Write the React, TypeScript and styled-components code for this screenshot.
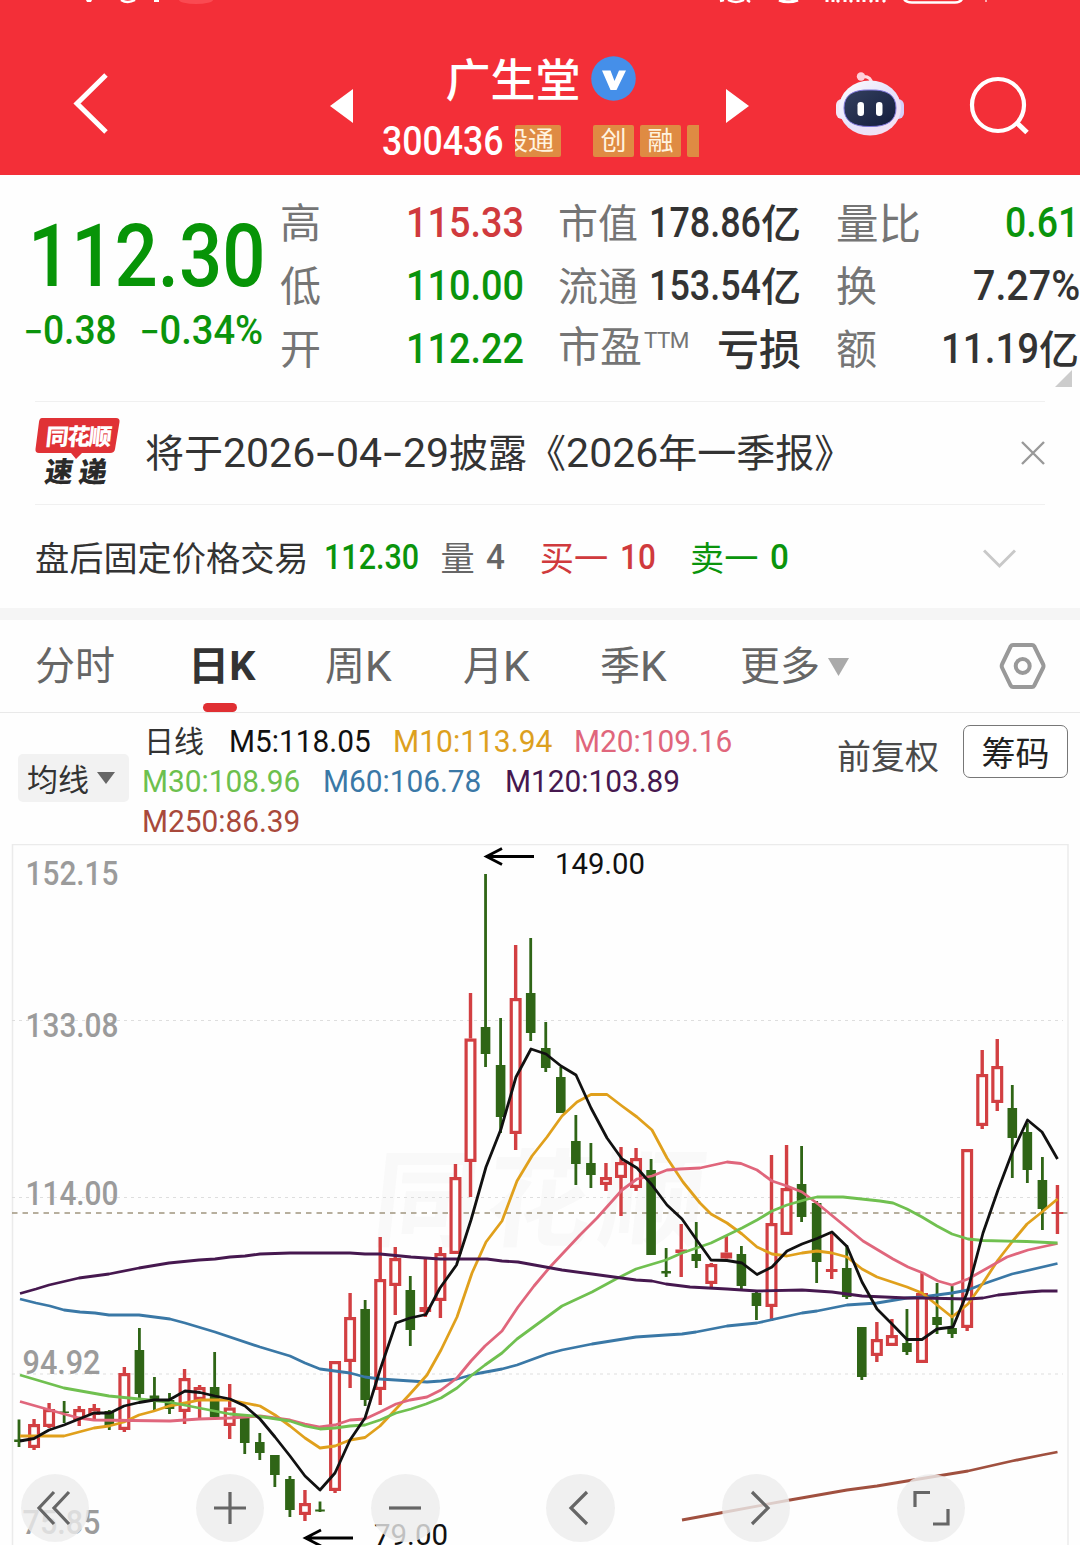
import React, { useLayoutEffect, useRef, useState } from 'react';
import styled, { createGlobalStyle } from 'styled-components';

const GlobalStyle = createGlobalStyle`
  * { box-sizing: border-box; }
  html, body { margin: 0; padding: 0; background: #fefefe; }
  body { width: 1080px; height: 1545px; overflow: hidden; }
  svg { display: block; flex: none; }
`;

const FONT = `Roboto, "Noto Sans CJK SC", sans-serif`;
const RED = '#d03a3d';
const GREEN = '#0a940c';
const INK = '#333';
const GREY = '#757575';

/* ---------- text squeezed to a column width ---------- */

const FitBox = styled.span<{ $w: number; $mr?: number; $ml?: number }>`
  display: inline-block;
  flex: none;
  width: ${(p) => p.$w}px;
  margin-left: ${(p) => p.$ml ?? 0}px;
  margin-right: ${(p) => p.$mr ?? 0}px;
  white-space: nowrap;
`;

const FitInner = styled.span<{ $size: number; $color: string; $weight: number }>`
  display: inline-block;
  transform-origin: 0 50%;
  font-size: ${(p) => p.$size}px;
  font-weight: ${(p) => p.$weight};
  color: ${(p) => p.$color};
`;

const Dash = styled.span`
  display: inline-block;
  margin: 0 1px;
  transform: scaleX(1.22);
  font-family: Inter, ${FONT};
  font-weight: 400;
`;

type FitProps = {
  w: number;
  size: number;
  color?: string;
  weight?: number;
  ml?: number;
  mr?: number;
  children: React.ReactNode;
};

function Fit({ w, size, color = INK, weight = 500, ml, mr, children }: FitProps) {
  const ref = useRef<HTMLSpanElement>(null);
  const [scale, setScale] = useState(1);
  useLayoutEffect(() => {
    if (ref.current) setScale(w / ref.current.offsetWidth);
  }, [w]);
  return (
    <FitBox $w={w} $ml={ml} $mr={mr}>
      <FitInner ref={ref} $size={size} $color={color} $weight={weight} style={{ transform: `scaleX(${scale})` }}>
        {children}
      </FitInner>
    </FitBox>
  );
}

/* ---------- page ---------- */

const Page = styled.main`
  width: 1080px;
  height: 1545px;
  overflow: hidden;
  background: #fefefe;
  font-family: ${FONT};
  color: ${INK};
  display: flex;
  flex-direction: column;
`;

/* ---------- header ---------- */

const Header = styled.header`
  height: 175px;
  flex: none;
  background: #f32f38;
  color: #fff;
`;

const Toolbar = styled.div`
  display: flex;
  align-items: flex-start;
  padding: 38px 50px 0 72px;
`;

const IconButton = styled.button<{ $ml?: number; $mt?: number }>`
  border: 0;
  padding: 0;
  background: none;
  flex: none;
  margin-left: ${(p) => p.$ml ?? 0}px;
  margin-top: ${(p) => p.$mt ?? 0}px;
`;

const Title = styled.div`
  width: 316px;
  margin-left: 30px;
  flex: none;
`;

const NameRow = styled.div`
  display: flex;
  justify-content: center;
  align-items: center;
  height: 66px;
  gap: 10px;
  padding-right: 1px;
`;

const Name = styled.h1`
  margin: 0;
  padding-top: 6px;
  font-size: 45px;
  line-height: 60px;
  font-weight: 500;
`;

const CodeRow = styled.div`
  display: flex;
  align-items: center;
  height: 58px;
  line-height: 50px;

  ${FitBox} {
    padding-top: 8px;
  }
`;

const Tags = styled.div`
  display: flex;
  width: 184px;
  height: 32px;
  overflow: hidden;
`;

const Tag = styled.span<{ $w: number; $ml?: number; $shift?: number }>`
  flex: none;
  width: ${(p) => p.$w}px;
  height: 32px;
  margin-left: ${(p) => p.$ml ?? 0}px;
  border-radius: 2px;
  background: #df8b43;
  color: #fff4e0;
  font-size: 26px;
  line-height: 32px;
  text-align: center;
  text-indent: ${(p) => p.$shift ?? 0}px;
  white-space: nowrap;
  overflow: hidden;
`;

/* ---------- quote ---------- */

const Quote = styled.section`
  position: relative;
  height: 226px;
  flex: none;
  display: flex;
  padding: 18px 0 0 0;
`;

const PriceBlock = styled.div`
  width: 280px;
  flex: none;
  padding-top: 12px;
`;

const Price = styled.div`
  height: 102px;
  line-height: 102px;
  padding-left: 28px;
`;

const Change = styled.div`
  display: flex;
  height: 46px;
  line-height: 46px;
  padding-left: 24px;
`;

const Stats = styled.div`
  display: grid;
  grid-template-columns: repeat(3, 243px);
  grid-auto-rows: 63px;
  column-gap: 35px;
`;

const Stat = styled.div`
  display: flex;
  justify-content: space-between;
  align-items: center;
  line-height: 57px;
  white-space: nowrap;

  ${FitBox} {
    padding-top: 5px;
  }
`;

const Label = styled.span<{ $size?: number }>`
  font-size: ${(p) => p.$size ?? 41}px;
  color: ${GREY};
`;

const Sup = styled.span`
  margin-left: 2px;
  font-size: 22.5px;
  letter-spacing: -0.6px;
  position: relative;
  top: -14px;
`;

const Value = styled.span`
  display: flex;
  align-items: center;
`;

const Unit = styled.span<{ $size?: number }>`
  font-size: ${(p) => p.$size ?? 40}px;
  font-weight: 500;
  color: ${INK};
`;

const Corner = styled.span`
  position: absolute;
  right: 8px;
  top: 195px;
  width: 17px;
  height: 17px;
  background: #ccc;
  clip-path: polygon(100% 0, 100% 100%, 0 100%);
`;

/* ---------- notice ---------- */

const Notice = styled.section`
  height: 104px;
  flex: none;
  margin: 0 35px;
  border-top: 1px solid #f0f0f0;
  border-bottom: 1px solid #f0f0f0;
  display: flex;
  align-items: center;
`;

const NoticeText = styled.p`
  margin: 0 0 0 25px;
  flex: 1;
  font-size: 39px;
  line-height: 60px;
  white-space: nowrap;
`;

const Digits = styled.span`
  font-size: 41px;
`;

/* ---------- after hours ---------- */

const AfterHours = styled.section`
  height: 103px;
  flex: none;
  display: flex;
  align-items: center;
  padding: 4px 64px 0 35px;
  line-height: 46px;

  ${FitBox} {
    padding-top: 4px;
  }
`;

const Word = styled.span<{ $color?: string; $ml?: number }>`
  font-size: 34.2px;
  white-space: nowrap;
  color: ${(p) => p.$color ?? INK};
  margin-left: ${(p) => p.$ml ?? 0}px;
`;

const Push = styled.span`
  margin-left: auto;
`;

const Band = styled.div`
  height: 12px;
  flex: none;
  background: #f5f5f5;
`;

/* ---------- tabs ---------- */

const Tabs = styled.nav`
  height: 93px;
  flex: none;
  border-bottom: 1px solid #e9e9e9;
  display: flex;
  padding: 0 34px 0 35px;
`;

const Tab = styled.div<{ $active?: boolean; $w: number }>`
  width: ${(p) => p.$w}px;
  flex: none;
  display: flex;
  flex-direction: column;
  align-items: flex-start;
  font-size: 40px;
  line-height: 60px;
  height: 92px;
  color: ${(p) => (p.$active ? INK : '#666')};
  font-weight: ${(p) => (p.$active ? 700 : 400)};
  padding-top: 2px;
`;

const TabLabel = styled.span`
  display: flex;
  align-items: center;
  height: 81px;
  padding-top: 9px;
`;

const Kay = styled.span`
  font-size: 42.5px;
`;

const Marker = styled.span`
  width: 34px;
  height: 9px;
  margin-left: 15px;
  border-radius: 5px;
  background: #e02f33;
`;

const Triangle = styled.span<{ $w: number; $h: number; $color: string }>`
  width: ${(p) => p.$w}px;
  height: ${(p) => p.$h}px;
  margin-left: 8px;
  background: ${(p) => p.$color};
  clip-path: polygon(0 0, 100% 0, 50% 100%);
`;

/* ---------- moving averages ---------- */

const Averages = styled.section`
  height: 131px;
  flex: none;
  display: flex;
  align-items: flex-start;
  padding-left: 18px;
`;

const Picker = styled.button`
  width: 111px;
  height: 48px;
  margin: 41px 14px 0 0;
  flex: none;
  border: 0;
  border-radius: 5px;
  background: #f2f2f2;
  color: ${INK};
  font: 400 31px/42px ${FONT};
  padding: 0 0 0 9px;
  display: flex;
  align-items: center;
`;

const PickerText = styled.span`
  padding-top: 5px;
`;

const Legend = styled.div`
  width: 694px;
  flex: none;
  padding-top: 9px;
`;

const LegendRow = styled.div`
  display: flex;
  height: 40px;
  line-height: 40px;
`;

const LegendTitle = styled.span`
  font-size: 30px;
  width: 86px;
  padding-left: 1px;
`;

const Adjust = styled.span`
  font-size: 34px;
  line-height: 52px;
  margin-top: 18px;
  color: #4a4a4a;
`;

const ChipButton = styled.button`
  width: 105px;
  height: 53px;
  margin: 12px 0 0 24px;
  border: 1px solid #777;
  border-radius: 7px;
  background: #fff;
  color: #222;
  font: 400 34px/46px ${FONT};
  padding: 5px 0 0;
`;

/* ---------- chart ---------- */

const ChartArea = styled.section`
  position: relative;
  height: 701px;
  flex: none;
`;

const Controls = styled.div`
  position: absolute;
  left: 20.8px;
  top: 629.5px;
  display: flex;
  gap: 106.8px;
`;

const RoundButton = styled.button`
  width: 68.4px;
  height: 68.4px;
  border: 0;
  border-radius: 50%;
  padding: 0;
  background: rgba(236, 236, 236, 0.8);
  display: grid;
  place-items: center;
`;

type Candle = ['r' | 'g', number, number, number, number];

// direction, high, low, body top, body bottom
const candles: Candle[] = [
  ['g', 1419.5, 1447, 1439.5, 1442], ['r', 1419, 1450, 1424, 1448], ['r', 1403, 1428, 1409, 1427],
  ['g', 1401, 1423, 1411.5, 1413], ['r', 1406, 1426, 1409, 1420], ['r', 1404, 1420, 1408, 1415],
  ['g', 1410, 1430, 1411, 1426], ['r', 1367, 1432, 1373, 1430], ['g', 1328, 1398, 1350, 1394],
  ['g', 1377, 1410, 1395.5, 1401], ['g', 1393, 1414, 1400, 1409], ['r', 1369, 1424, 1378, 1412],
  ['r', 1385, 1418, 1387, 1400], ['g', 1352, 1417, 1387, 1417], ['r', 1384, 1439, 1407.5, 1426],
  ['g', 1416, 1454, 1417, 1443], ['g', 1433, 1460, 1442, 1453], ['g', 1455, 1487, 1455, 1475],
  ['g', 1476, 1517, 1479, 1510], ['r', 1490, 1521, 1503, 1515], ['g', 1501.5, 1512, 1509.5, 1511.5],
  ['r', 1361, 1493, 1361, 1491], ['r', 1293, 1388, 1317, 1362], ['g', 1300, 1406, 1309, 1400],
  ['r', 1237, 1405, 1279, 1390], ['r', 1247, 1315, 1258, 1286], ['g', 1276, 1346, 1290, 1330],
  ['r', 1258, 1317, 1307, 1312], ['r', 1247, 1318, 1253, 1301], ['r', 1164, 1254, 1177, 1254],
  ['r', 993, 1197, 1038.5, 1162], ['g', 874, 1067, 1027, 1054], ['g', 1018, 1133, 1065, 1117],
  ['r', 945, 1150, 998, 1134], ['g', 938, 1041, 993, 1033], ['g', 1022, 1072, 1048, 1068],
  ['g', 1067, 1113, 1077, 1113], ['g', 1115, 1185, 1141, 1164], ['g', 1143, 1188, 1163, 1175],
  ['r', 1163, 1191, 1177, 1185], ['r', 1147, 1216, 1162, 1178], ['r', 1148, 1191, 1158, 1188],
  ['g', 1159, 1255, 1170, 1255], ['g', 1248, 1277, 1271, 1273.5], ['r', 1224, 1277, 1249.5, 1253],
  ['g', 1222, 1268, 1254, 1261], ['r', 1263, 1287, 1264, 1284], ['r', 1236, 1259, 1252.5, 1258.5],
  ['g', 1246, 1289, 1254, 1286], ['g', 1291, 1320, 1293, 1306], ['r', 1155, 1321, 1223, 1307],
  ['r', 1145, 1235, 1188, 1235], ['g', 1146, 1222, 1184, 1217], ['g', 1201, 1283, 1203, 1262],
  ['r', 1234, 1279, 1269, 1272], ['g', 1245, 1299, 1268, 1297], ['g', 1327, 1380, 1327, 1377],
  ['r', 1322, 1362, 1339, 1356], ['r', 1319, 1346, 1335, 1346], ['g', 1309, 1355, 1343, 1352],
  ['r', 1273, 1363, 1293, 1363], ['g', 1283, 1334, 1317, 1325], ['g', 1286, 1338, 1328, 1334],
  ['r', 1149, 1331, 1149, 1328], ['r', 1050, 1129, 1074, 1126], ['r', 1039, 1111, 1066, 1103],
  ['g', 1085, 1178, 1108, 1138], ['g', 1123, 1183, 1132, 1170], ['g', 1157, 1230, 1180, 1209],
  ['r', 1185, 1234, 1212, 1214],
];

const averages: { color: string; points: string }[] = [
  {
    color: '#a0503f',
    points: '682,1520 720,1513 790,1500 847,1490 877,1486 907,1481 968,1471 1012,1461 1042,1455 1057.5,1452',
  },
  {
    color: '#3a78a6',
    points:
      '20,1299 36,1303 50,1306 64,1310 80,1312 95,1313 109,1315 139,1315 170,1319 185,1323 215,1332 260,1347 290,1356 305,1363 320,1369 335,1371 350,1373 365,1377 380,1379 411,1381 427,1382 441,1381 457,1379 475,1374 502,1369 517,1365 547,1354 562,1350 592,1344 636,1337 666,1335 682,1334 696,1332 727,1326 757,1323 802,1313 817,1311 847,1305 877,1303 907,1298 922,1297 952,1293 968,1290 983,1284 1012,1274 1057.5,1263.5',
  },
  {
    color: '#e0a01c',
    points:
      '20,1436 64,1436 79,1432 94,1428 109,1426 124,1422 139,1415 154,1411 169,1406 185,1403 200,1400 230,1400 245,1403 260,1406 275,1415 290,1426 305,1438 320,1448 335,1446 350,1440 365,1437.5 380,1426 396,1409 410,1394 427,1375 441,1350 457,1317 472,1273 486,1242 502,1221 517,1181 532,1156 547,1137 562,1116 577,1102 591,1094.5 607,1094.5 622,1106 637,1117 652,1130 667,1158 683,1182 700,1203 711,1214 727,1223 742,1234 757,1247 772,1254 787,1256 802,1253 817,1251 832,1253 847,1257 862,1269 877,1277 892,1282 907,1287 922,1293 937,1305 952,1317 968,1304 983,1283 998,1260 1012,1242 1027,1224 1042,1212 1057.5,1199',
  },
  {
    color: '#e0667c',
    points:
      '20,1401.5 64,1414 79,1418 94,1420 170,1421 199,1419 230,1418 260,1416 290,1420 305,1424 320,1427 335,1425 350,1420 365,1419 380,1412 396,1404 410,1400 427,1397 441,1390 457,1378 471,1361 485,1346 502,1331 518,1307 534,1286 550,1267 565,1251 580,1235 597,1218 622,1190 637,1179 652,1176 667,1170 680,1169 700,1168 727,1162 741,1163.5 757,1170 772,1181 787,1186 802,1192 818,1204 863,1241 893,1259 908,1267 923,1273 938,1281 952,1285 968,1279 1007,1257 1028,1250 1057.5,1243.5',
  },
  {
    color: '#70c050',
    points:
      '20,1375 64,1388 109,1396 139,1399 169,1402 199,1408 230,1414 260,1416.5 290,1421 305,1426 320,1429 335,1428 350,1426 365,1425 380,1420 396,1413 411,1409 426,1404 441,1398 457,1388 472,1375 485,1365 502,1353 517,1339 532,1328 547,1317 562,1306 592,1292 616,1279 636,1269 666,1260 682,1253 711,1243 742,1228 757,1220 772,1211 787,1205 808,1199 817,1197 843,1197 880,1201 893,1203 907,1209 922,1217 937,1226 952,1234 968,1239 983,1240.5 1027,1241.5 1057.5,1243',
  },
  {
    color: '#46184f',
    points:
      '20,1293.5 36,1289 49,1285 79,1278 109,1274 139,1268 169,1263 199,1260 215,1259 230,1257 245,1256 260,1254 290,1253 350,1253 365,1254 380,1254 411,1257 440,1259 487,1259 502,1261 518,1262 562,1270 592,1274 636,1280 652,1281 666,1284 690,1287 727,1289 757,1291 802,1290 832,1292 862,1296 907,1298 922,1298 968,1299 983,1298 998,1295 1028,1292 1042,1291 1057.5,1291',
  },
  {
    color: '#111',
    points:
      '20,1441 34,1438.5 49,1430 64,1425 79,1419 94,1413 110,1413 124,1406 139,1402.5 154,1400 169,1400 185,1391 200,1392.5 215,1396 230,1399 245,1406 260,1419 275,1437 290,1456 305,1476 320,1490 335,1473 350,1440 365,1418 380,1370 396,1323 410,1318 426,1314.5 440,1288 456.5,1265 471,1220 486,1167 501,1129 516,1077 531,1049 546,1054 561,1066 576,1075 591,1108 607,1138 622,1159 637,1168 652,1185 667,1205 682,1219 696,1239 711,1260 727,1260.5 742,1263 757,1274.5 772,1267 787,1251 802,1244 817,1238.5 832,1232 847,1246.5 862,1282 877,1309 892,1324 907,1339.5 922,1339.5 937,1329 953,1327 967,1293 983,1233 998,1190 1012,1153 1027.5,1120 1042,1132 1057.5,1159',
  },
];

const axis: [string, number, number, number][] = [
  ['152.15', 25.5, 884.5, 93],
  ['133.08', 25.5, 1036.5, 93],
  ['114.00', 25.5, 1205, 93],
  ['94.92', 22.5, 1374, 78],
  ['75.85', 22.5, 1534, 78],
];

function CandleMark({ i, c }: { i: number; c: Candle }) {
  const [dir, hi, lo, top, bottom] = c;
  const x = 19 + i * 15.05;
  if (dir === 'g') {
    return (
      <g fill="#2f6516">
        <rect x={x - 1.4} y={hi} width={2.8} height={lo - hi} />
        <rect x={x - 4.8} y={top} width={9.6} height={bottom - top} />
      </g>
    );
  }
  const flat = bottom - top < 7;
  return (
    <g fill="#d23f42">
      <rect x={x - 1.7} y={hi} width={3.4} height={Math.max(0, top - hi)} />
      <rect x={x - 1.7} y={bottom} width={3.4} height={Math.max(0, lo - bottom)} />
      {flat ? (
        <rect x={x - 5.8} y={top} width={11.6} height={bottom - top} />
      ) : (
        <rect x={x - 4.4} y={top + 1.6} width={8.8} height={bottom - top - 3.2} fill="#fefefe" stroke="#d23f42" strokeWidth={3.2} />
      )}
    </g>
  );
}

function Chart() {
  return (
    <svg width="1080" height="701" viewBox="0 844 1080 701" fontFamily={FONT}>
      <text x="372" y="1238" fill="#f9f9f9" fontWeight="700" fontSize="106" textLength="332" transform="skewX(-6) translate(128 0)">
        同花顺
      </text>
      <path d="M12.5 1545V844.5H1068V1545" fill="none" stroke="#ebebeb" strokeWidth="1.5" />
      <g stroke="#dedede" strokeWidth="1" strokeDasharray="3 4">
        <path d="M12 1020.5H1063" />
        <path d="M12 1197.5H1063" />
        <path d="M12 1374H1063" />
      </g>
      {axis.map(([t, x, y, w]) => (
        <text key={t} x={x} y={y} fontSize="33.5" fontWeight="500" fill="#9b9b9b" textLength={w} lengthAdjust="spacingAndGlyphs">
          {t}
        </text>
      ))}
      <path d="M12 1213H1068" stroke="#a0957f" strokeWidth="1.4" strokeDasharray="5.5 5" />
      {candles.map((c, i) => (
        <CandleMark key={i} i={i} c={c} />
      ))}
      {averages.map((a) => (
        <polyline key={a.color} points={a.points} fill="none" stroke={a.color} strokeWidth="2.8" strokeLinejoin="round" />
      ))}
      <g fill="none" stroke="#000" strokeWidth="2.8">
        <path d="M534 856.5H487M502 848.5L486.5 856.5L502 864.5" />
        <path d="M353 1538H306M321 1530L305.5 1538L321 1546" />
      </g>
      <text x="555" y="874" fontSize="30" fill="#111" textLength="90" lengthAdjust="spacingAndGlyphs">149.00</text>
      <text x="374" y="1545" fontSize="30" fill="#111" textLength="74" lengthAdjust="spacingAndGlyphs">79.00</text>
    </svg>
  );
}

const controlIcons = [
  'M15 0L0 16L15 32M30 0L15 16L30 32',
  'M16 0V32M0 16H32',
  'M0 16H32',
  'M22 0L6 16L22 32',
  'M12 0L28 16L12 32',
  'M0 15V0.5H15M33 17V32H18',
];

function StatusStrip() {
  return (
    <svg width="1080" height="8" viewBox="0 0 1080 8" fill="none" stroke="#fff">
      <path d="M86 0H92L91 2H87Z" fill="#fff" stroke="none" />
      <path d="M121 0Q127.500 4 135 0" strokeWidth="2.500" />
      <path d="M154 0H159V2H154Z" fill="#fff" stroke="none" />
      <ellipse cx="196" cy="0" rx="17" ry="4" fill="#fa4a52" stroke="none" />
      <path d="M720 1L724 0M728 0Q736 4 744 0M747 0L750 2" strokeWidth="2.500" />
      <path d="M779 0Q788 3.500 798 0" strokeWidth="3" />
      <path d="M827 0V2M833 0V2M839 0L837 2M845 0V2M852 0L850 2M858 0V2M864 0V2M870 0L872 2M877 0V2M883 0L885 2" strokeWidth="3" />
      <path d="M903 -4Q904 2.500 912 2.500H955Q962 2.500 963 -4" strokeWidth="2.500" />
      <path d="M986 0V2" strokeWidth="2" opacity="0.600" />
    </svg>
  );
}

function BrandLogo() {
  return (
    <svg width="85" height="72" viewBox="0 0 85 72">
      <path d="M7 1H81Q85 1 84.500 5L80 32Q79.500 36 75 36H47L41 42L36 36H4Q0 36 0.500 32L4 5Q4.500 1 7 1Z" fill="#e03236" />
      <g fontFamily={FONT} fontWeight="900">
        <text x="13" y="28" fontSize="23" fill="#fff" textLength="66" transform="skewX(-6)">同花顺</text>
        <text x="18" y="65.500" fontSize="28" fill="#2a2a2a" textLength="62" transform="skewX(-8)">速递</text>
      </g>
    </svg>
  );
}

function Robot() {
  return (
    <svg width="70" height="66" viewBox="0 0 70 66">
      <defs>
        <linearGradient id="shell" x1="0" y1="0" x2="1" y2="1">
          <stop offset="0" stopColor="#fff" />
          <stop offset="0.5" stopColor="#e6e3fb" />
          <stop offset="1" stopColor="#f7dff0" />
        </linearGradient>
        <linearGradient id="visor" x1="0" y1="0" x2="1" y2="1">
          <stop offset="0" stopColor="#33405f" />
          <stop offset="1" stopColor="#141c3c" />
        </linearGradient>
      </defs>
      <path d="M27 4.500Q36 3.500 37 12" fill="none" stroke="#ffdbe2" strokeWidth="3" />
      <circle cx="26" cy="4.500" r="4.200" fill="#ffcfd9" />
      <rect x="1" y="27" width="14" height="20" rx="6" fill="#f3e8f6" />
      <rect x="55" y="27" width="14" height="20" rx="6" fill="#d5cff8" />
      <ellipse cx="35" cy="36" rx="31" ry="27.500" fill="url(#shell)" />
      <path d="M35 18Q61 17 61 36Q61 55 35 54.500Q9 55 9 36Q9 17 35 18Z" fill="url(#visor)" stroke="#7c74d8" strokeWidth="1" />
      <rect x="22.500" y="30" width="6.500" height="14" rx="3.200" fill="#fff" />
      <rect x="41" y="30" width="6.500" height="14" rx="3.200" fill="#fff" />
    </svg>
  );
}

export default function App() {
  return (
    <>
      <GlobalStyle />
      <Page>
        <Header>
          <StatusStrip />
          <Toolbar>
            <IconButton $mt={26}>
              <svg width="38" height="64" viewBox="0 0 38 64">
                <path d="M34 3L5 31.500L34 60" fill="none" stroke="#fff" strokeWidth="5" />
              </svg>
            </IconButton>
            <IconButton $ml={220} $mt={42}>
              <svg width="23" height="36" viewBox="0 0 23 36"><path d="M0 18L23 1V35Z" fill="#fff" /></svg>
            </IconButton>
            <Title>
              <NameRow>
                <Name>广生堂</Name>
                <svg width="45" height="46" viewBox="0 0 45 46">
                  <circle cx="22.500" cy="22.500" r="22.300" fill="#458fe9" />
                  <path d="M11 14.500H19.500L23.500 25L28 14.500H35L25.500 34H19.500Z" fill="#fff" />
                </svg>
              </NameRow>
              <CodeRow>
                <Fit w={122} size={41.500} color="#fff" ml={-1} mr={11}>300436</Fit>
                <Tags>
                  <Tag $w={46} $shift={-20}>股通</Tag>
                  <Tag $w={41} $ml={32}>创</Tag>
                  <Tag $w={41} $ml={6}>融</Tag>
                  <Tag $w={41} $ml={6} $shift={-12}>I</Tag>
                </Tags>
              </CodeRow>
            </Title>
            <IconButton $ml={27} $mt={42}>
              <svg width="23" height="36" viewBox="0 0 23 36"><path d="M23 18L0 1V35Z" fill="#fff" /></svg>
            </IconButton>
            <IconButton $ml={86} $mt={26}><Robot /></IconButton>
            <IconButton $ml={64} $mt={30}>
              <svg width="60" height="60" viewBox="0 0 60 60" fill="none" stroke="#fff">
                <circle cx="29" cy="29" r="26" strokeWidth="4.200" />
                <path d="M47 46L58 56.500" strokeWidth="5" />
              </svg>
            </IconButton>
          </Toolbar>
        </Header>

        <Quote>
          <PriceBlock>
            <Price><Fit w={238} size={88} color="#079407">112.30</Fit></Price>
            <Change>
              <Fit w={93} size={40} color={GREEN} mr={23}><Dash>-</Dash>0.38</Fit>
              <Fit w={123} size={40} color={GREEN}><Dash>-</Dash>0.34%</Fit>
            </Change>
          </PriceBlock>
          <Stats>
            <Stat><Label>高</Label><Fit w={118} size={42} color={RED} mr={-1}>115.33</Fit></Stat>
            <Stat><Label $size={40}>市值</Label><Value><Fit w={112} size={42}>178.86</Fit><Unit>亿</Unit></Value></Stat>
            <Stat><Label $size={42.500}>量比</Label><Fit w={74} size={42} color={GREEN}>0.61</Fit></Stat>
            <Stat><Label>低</Label><Fit w={118} size={42} color={GREEN} mr={-1}>110.00</Fit></Stat>
            <Stat><Label $size={40}>流通</Label><Value><Fit w={112} size={42}>153.54</Fit><Unit>亿</Unit></Value></Stat>
            <Stat><Label>换</Label><Fit w={107} size={42} mr={-1}>7.27%</Fit></Stat>
            <Stat><Label>开</Label><Fit w={118} size={42} color={GREEN} mr={-1}>112.22</Fit></Stat>
            <Stat><Label $size={42}>市盈<Sup>TTM</Sup></Label><Unit $size={42}>亏损</Unit></Stat>
            <Stat><Label>额</Label><Value><Fit w={98} size={42}>11.19</Fit><Unit>亿</Unit></Value></Stat>
          </Stats>
          <Corner />
        </Quote>

        <Notice>
          <BrandLogo />
          <NoticeText>
            将于<Digits>2026<Dash>-</Dash>04<Dash>-</Dash>29</Digits>披露《<Digits>2026</Digits>年一季报》
          </NoticeText>
          <svg width="24" height="24" viewBox="0 0 24 24"><path d="M1 1L23 23M23 1L1 23" stroke="#999" strokeWidth="2.400" /></svg>
        </Notice>

        <AfterHours>
          <Word>盘后固定价格交易</Word>
          <Fit w={95} size={35} color={GREEN} ml={15}>112.30</Fit>
          <Word $color="#666" $ml={22}>量</Word>
          <Fit w={19} size={35} color="#666" ml={11}>4</Fit>
          <Word $color={RED} $ml={35}>买一</Word>
          <Fit w={36} size={35} color={RED} ml={12}>10</Fit>
          <Word $color={GREEN} $ml={34}>卖一</Word>
          <Fit w={19} size={35} color={GREEN} ml={11}>0</Fit>
          <Push>
            <svg width="33" height="20" viewBox="0 0 33 20"><path d="M1 1.500L16.500 17L32 1.500" fill="none" stroke="#c8c8c8" strokeWidth="3" /></svg>
          </Push>
        </AfterHours>
        <Band />

        <Tabs>
          <Tab $w={153}><TabLabel>分时</TabLabel></Tab>
          <Tab $w={137} $active><TabLabel><Fit w={67} size={40} weight={700}>日K</Fit></TabLabel><Marker /></Tab>
          <Tab $w={138}><TabLabel>周<Kay>K</Kay></TabLabel></Tab>
          <Tab $w={137}><TabLabel>月<Kay>K</Kay></TabLabel></Tab>
          <Tab $w={140}><TabLabel>季<Kay>K</Kay></TabLabel></Tab>
          <Tab $w={140}><TabLabel>更多<Triangle $w={21} $h={18} $color="#aaa" /></TabLabel></Tab>
          <IconButton as="span" $ml={119} $mt={22}>
            <svg width="48" height="48" viewBox="0 0 48 48" fill="none" stroke="#999" strokeWidth="4">
              <path d="M14 3H33Q34.500 3 35.300 4.300L44 22Q45 24 44 26L35.300 43.500Q34.500 45 33 45H14Q12.500 45 11.700 43.500L3.200 26Q2.200 24 3.200 22L11.700 4.300Q12.500 3 14 3Z" />
              <circle cx="23.700" cy="24" r="7" />
            </svg>
          </IconButton>
        </Tabs>

        <Averages>
          <Picker><PickerText>均线</PickerText><Triangle $w={18} $h={12} $color="#666" /></Picker>
          <Legend>
            <LegendRow>
              <LegendTitle>日线</LegendTitle>
              <Fit w={142} size={31.500} weight={400} color="#111" mr={22}>M5:118.05</Fit>
              <Fit w={159} size={31.500} weight={400} color="#dda01e" mr={22}>M10:113.94</Fit>
              <Fit w={158} size={31.500} weight={400} color="#e0667c">M20:109.16</Fit>
            </LegendRow>
            <LegendRow>
              <Fit w={158} size={31.500} weight={400} color="#6cc04e" mr={23} ml={-1}>M30:108.96</Fit>
              <Fit w={158} size={31.500} weight={400} color="#3a78a6" mr={24}>M60:106.78</Fit>
              <Fit w={175} size={31.500} weight={400} color="#46184f">M120:103.89</Fit>
            </LegendRow>
            <LegendRow>
              <Fit w={158} size={31.500} weight={400} color="#a8493b" ml={-1}>M250:86.39</Fit>
            </LegendRow>
          </Legend>
          <Adjust>前复权</Adjust>
          <ChipButton>筹码</ChipButton>
        </Averages>

        <ChartArea>
          <Chart />
          <Controls>
            {controlIcons.map((d, i) => (
              <RoundButton key={d}>
                <svg width="48" height="36" viewBox="-8 -2 48 36">
                  <path d={d} fill="none" stroke="#666" strokeWidth="3.200" />
                </svg>
              </RoundButton>
            ))}
          </Controls>
        </ChartArea>
      </Page>
    </>
  );
}
